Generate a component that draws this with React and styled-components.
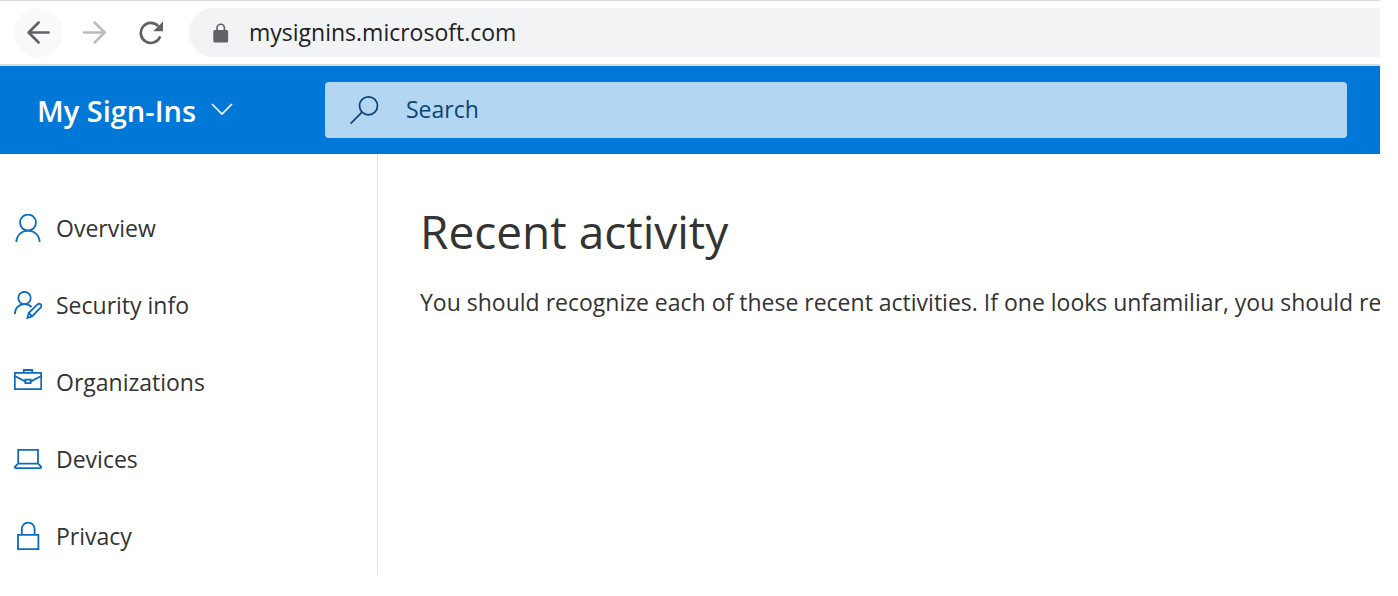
import styled, { createGlobalStyle } from 'styled-components';

const links = [
    { label: 'Overview', Icon: PersonIcon },
    { label: 'Security info', Icon: PersonEditIcon },
    { label: 'Organizations', Icon: BriefcaseIcon },
    { label: 'Devices', Icon: LaptopIcon },
    { label: 'Privacy', Icon: PadlockIcon },
];

function App() {
    return (
        <>
            <GlobalStyle />
            <Window>
                <Toolbar>
                    <NavButton type="button" aria-label="Back" $active>
                        <svg width="25" height="25" viewBox="0 0 25 25" fill="none" stroke="#5f6368" strokeWidth="2.6" strokeLinecap="round" strokeLinejoin="round">
                            <path d="M22.6 12.5H3M12.6 2.5L2.6 12.5L12.6 22.5" />
                        </svg>
                    </NavButton>
                    <NavButton type="button" aria-label="Forward" disabled>
                        <svg width="25" height="25" viewBox="0 0 25 25" fill="none" stroke="#babcbe" strokeWidth="2.6" strokeLinecap="round" strokeLinejoin="round">
                            <path d="M2 12.5H22M12.6 2.5L22.8 12.5L12.6 22.5" />
                        </svg>
                    </NavButton>
                    <NavButton type="button" aria-label="Reload">
                        <svg width="25" height="25" viewBox="0 0 25 25">
                            <path d="M22.2 16.4A10 10 0 1 1 20.2 6.2" fill="none" stroke="#5f6368" strokeWidth="2.7" />
                            <path d="M25 1.6V11.2H15.2Z" fill="#5f6368" />
                        </svg>
                    </NavButton>
                    <AddressBar>
                        <svg width="16" height="20" viewBox="0 0 16 20">
                            <rect x="0.3" y="7" width="14.8" height="12.4" rx="1.5" fill="#5f6368" />
                            <path d="M4 8V5A3.7 3.7 0 0 1 11.4 5V8" fill="none" stroke="#5f6368" strokeWidth="1.6" />
                        </svg>
                        <AddressInput type="text" aria-label="Address" defaultValue="mysignins.microsoft.com" />
                    </AddressBar>
                </Toolbar>

                <Header>
                    <AppMenu type="button">
                        My Sign-Ins
                        <svg width="22" height="14" viewBox="0 0 22 14" fill="none" stroke="#fff" strokeWidth="1.6">
                            <path d="M1 1L11 11L21 1" />
                        </svg>
                    </AppMenu>
                    <SearchBox>
                        <svg width="30" height="30" viewBox="0 0 30 30" fill="none" stroke="#0b4375" strokeWidth="1.7">
                            <circle cx="18.5" cy="10.8" r="9" />
                            <path d="M12 17.2L0.6 28.6" />
                        </svg>
                        <SearchInput type="search" aria-label="Search" placeholder="Search" />
                    </SearchBox>
                </Header>

                <Body>
                    <Sidebar>
                        {links.map(({ label, Icon }) => (
                            <SidebarLink href="#" key={label}>
                                <Icon />
                                {label}
                            </SidebarLink>
                        ))}
                    </Sidebar>
                    <Content>
                        <Title>Recent activity</Title>
                        <Description>
                            You should recognize each of these recent activities. If one looks unfamiliar, you should re
                        </Description>
                    </Content>
                </Body>
            </Window>
        </>
    );
}

export default App;

function PersonIcon() {
    return (
        <LinkIcon viewBox="0 0 28 28">
            <circle cx="14" cy="8.6" r="8" />
            <path d="M2.4 28C2.4 21.5 7.6 16.6 14 16.6S25.6 21.5 25.6 28" />
        </LinkIcon>
    );
}

function PersonEditIcon() {
    return (
        <LinkIcon viewBox="0 0 28 28">
            <circle cx="10.5" cy="7" r="6.2" />
            <path d="M0.8 23C0.8 17.3 5 13.2 10.5 13.2C13.4 13.2 16 14.3 17.6 16.1" />
            <path d="M13.4 27L14.8 21.8L23.8 13.2C25.8 11.8 28.4 14.2 26.8 16.4L18 25.4Z" />
            <path d="M14.8 21.8L18 25.4" />
        </LinkIcon>
    );
}

function BriefcaseIcon() {
    return (
        <LinkIcon viewBox="0 0 28 28">
            <path d="M0.8 4.8H27.2V21.2H0.8ZM9.8 4.8V2H18.2V4.8" />
            <path d="M0.8 8L11 13.4M17 13.4L27.2 8M11.4 11.6H16.6V15.2H11.4Z" />
        </LinkIcon>
    );
}

function LaptopIcon() {
    return (
        <LinkIcon viewBox="0 0 28 28">
            <path d="M4.2 18.6V4.8H24V18.6" />
            <path d="M4.2 18.6H24L27.2 21.8C27.2 22.6 26.8 23.2 26 23.2H2C1.2 23.2 0.8 22.6 0.8 21.8Z" />
        </LinkIcon>
    );
}

function PadlockIcon() {
    return (
        <LinkIcon viewBox="0 0 28 28">
            <path d="M4 12.8H24.4V27.2H4ZM7.8 12.8V7A6.4 6.4 0 0 1 20.6 7V12.8" />
        </LinkIcon>
    );
}

const GlobalStyle = createGlobalStyle`
    * {
        box-sizing: border-box;
    }

    body {
        margin: 0;
        background-color: #fffffd;
        font-family: "Open Sans", "Noto Sans", sans-serif;
        font-size: 23px;
        color: #333333;
    }

    button, input {
        font: inherit;
        color: inherit;
        border: none;
        outline: none;
        padding: 0;
    }
`;

const Window = styled.div`
    margin-right: 18px;
    background-color: #ffffff;
    overflow: hidden;
`;

const Toolbar = styled.div`
    display: flex;
    align-items: center;
    gap: 7px;
    height: 66px;
    padding-left: 14px;
    border-top: 1px solid #dadce0;
    border-bottom: 2px solid #dadce0;
`;

const NavButton = styled.button`
    display: flex;
    align-items: center;
    justify-content: center;
    flex-shrink: 0;
    width: 49px;
    height: 49px;
    border-radius: 50%;
    background-color: ${({ $active }) => ($active ? '#f9f9f9' : 'transparent')};
`;

const AddressBar = styled.div`
    display: flex;
    align-items: center;
    gap: 20px;
    flex: 1;
    height: 49px;
    margin-left: 7px;
    padding-left: 24px;
    border-radius: 25px 0 0 25px;
    background-color: #f1f3f4;
`;

const AddressInput = styled.input`
    flex: 1;
    min-width: 0;
    padding-bottom: 1px;
    background-color: transparent;
    color: #202124;
`;

const Header = styled.header`
    display: flex;
    align-items: center;
    height: 88px;
    padding-right: 33px;
    background-color: #0078d7;
`;

const AppMenu = styled.button`
    display: flex;
    align-items: center;
    gap: 15px;
    flex-shrink: 0;
    width: 325px;
    padding-left: 37px;
    background-color: transparent;
    color: #ffffff;
    font-size: 29px;
    font-weight: 600;
    white-space: nowrap;
`;

const SearchBox = styled.div`
    display: flex;
    align-items: center;
    gap: 26px;
    flex: 1;
    height: 56px;
    padding-left: 25px;
    border-radius: 4px;
    background-color: #b3d6f3;
`;

const SearchInput = styled.input`
    flex: 1;
    min-width: 0;
    padding-bottom: 2px;
    background-color: transparent;

    &::placeholder {
        color: #0b4375;
        opacity: 1;
    }
`;

const Body = styled.div`
    display: flex;
`;

const Sidebar = styled.nav`
    flex-shrink: 0;
    width: 378px;
    padding: 35px 0 1px;
    border-right: 1px solid #e5e5e5;
`;

const SidebarLink = styled.a`
    display: flex;
    align-items: center;
    gap: 14px;
    height: 77px;
    padding-left: 14px;
    color: #333333;
    text-decoration: none;
`;

const LinkIcon = styled.svg`
    width: 28px;
    height: 28px;
    fill: none;
    stroke: #0f6cbd;
    stroke-width: 1.8;
`;

const Content = styled.main`
    flex: 1;
    min-width: 0;
    padding: 44px 0 0 42px;
`;

const Title = styled.h1`
    margin: 0;
    font-size: 46px;
    font-weight: 400;
    line-height: 66px;
`;

const Description = styled.p`
    margin: 22px 0 0;
    line-height: 32px;
    white-space: nowrap;
    overflow: hidden;
`;
